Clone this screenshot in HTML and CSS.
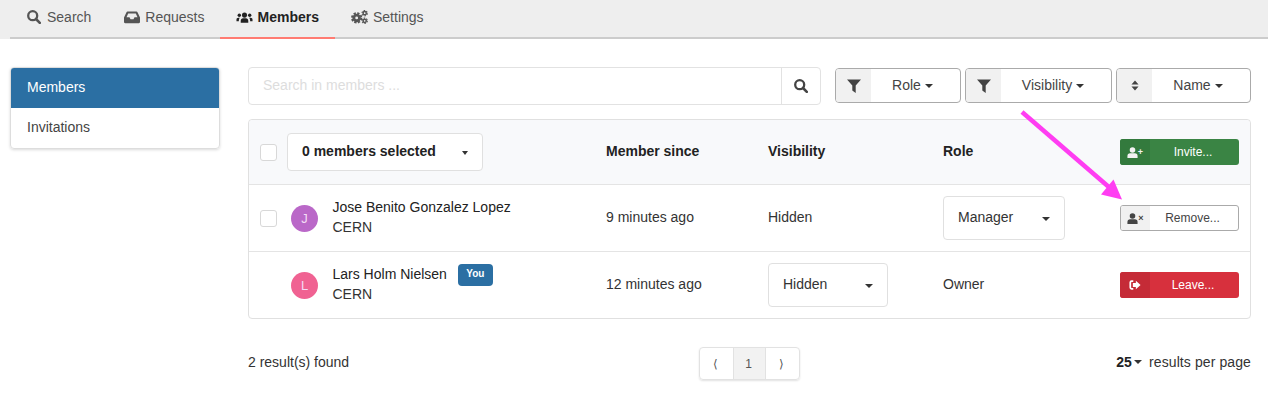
FILE: index.html
```html
<!DOCTYPE html>
<html lang="en">
<head>
    <meta charset="UTF-8">
    <title>Members</title>
    <link rel="stylesheet" href="styles.css">
</head>
<body>
    <svg width="0" height="0" class="defs">
        <symbol id="i-search" viewBox="0 0 14 14"><circle cx="5.7" cy="5.7" r="4.5" fill="none" stroke="currentColor" stroke-width="2.3"/><path d="M9 9l3.8 3.8" stroke="currentColor" stroke-width="2.6" stroke-linecap="round"/></symbol>
        <symbol id="i-inbox" viewBox="0 0 16 14"><path d="M3.6 1.5h8.8c.5 0 .9.3 1.1.7L16 7.6V12c0 .7-.5 1.2-1.2 1.2H1.2C.5 13.2 0 12.7 0 12V7.6l2.5-5.4c.2-.4.6-.7 1.1-.7zm.6 2L2.5 7.2h3l1 2h3l1-2h3l-1.7-3.7z" fill="currentColor" fill-rule="evenodd"/></symbol>
        <symbol id="i-users" viewBox="0 0 18 14"><circle cx="9" cy="5" r="2.7" fill="currentColor"/><circle cx="3.5" cy="5.2" r="1.8" fill="currentColor"/><circle cx="14.5" cy="5.2" r="1.8" fill="currentColor"/><path d="M5 13v-1.8C5 9.4 6 8.4 7.5 8.4h3c1.5 0 2.5 1 2.5 2.8V13zM.5 11.5V9.8c0-1.2.8-2 2-2h1.7c-.8.7-1.2 1.8-1.2 3.7zM17.5 11.5V9.8c0-1.2-.8-2-2-2h-1.7c.8.7 1.2 1.8 1.2 3.7z" fill="currentColor"/></symbol>
        <symbol id="i-cogs" viewBox="0 0 18 14"><g fill="none" stroke="currentColor"><circle cx="6" cy="8" r="3" stroke-width="3"/><circle cx="6" cy="8" r="5" stroke-width="2" stroke-dasharray="2.4 1.53"/><circle cx="14.5" cy="3" r="1.7" stroke-width="1.6"/><circle cx="14.5" cy="3" r="2.8" stroke-width="1.2" stroke-dasharray="1.6 1.33"/><circle cx="14.5" cy="11" r="1.7" stroke-width="1.6"/><circle cx="14.5" cy="11" r="2.8" stroke-width="1.2" stroke-dasharray="1.6 1.33"/></g></symbol>
        <symbol id="i-filter" viewBox="0 0 14 14"><path d="M0 .5h14L8.7 6.5V14L5.3 11.5V6.5z" fill="currentColor"/></symbol>
        <symbol id="i-sort" viewBox="0 0 10 14"><path d="M5 .5l4.5 5.3H.5zM5 13.5L.5 8.2h9z" fill="currentColor"/></symbol>
        <symbol id="i-user" viewBox="0 0 12 13"><circle cx="6" cy="3.6" r="3.3" fill="currentColor"/><path d="M0 13v-2.4C0 8.5 1.3 7.3 3.2 7.3h5.600c1.900 0 3.200 1.200 3.200 3.300V13z" fill="currentColor"/></symbol>
        <symbol id="i-signout" viewBox="0 0 14 14"><path d="M5 2.5H3C2 2.500 1.500 3 1.500 4v6c0 1 .5 1.500 1.500 1.500h2" fill="none" stroke="currentColor" stroke-width="2"/><path d="M8 2l5.500 5L8 12V9.200H4.500V4.800H8z" fill="currentColor"/></symbol>
    </svg>

    <nav class="tabs">
        <div class="tab-list">
            <a class="tab"><svg class="icon"><use href="#i-search"/></svg>Search</a>
            <a class="tab tab-requests"><svg class="icon icon-inbox"><use href="#i-inbox"/></svg>Requests</a>
            <a class="tab active"><svg class="icon icon-wide"><use href="#i-users"/></svg>Members</a>
            <a class="tab"><svg class="icon icon-wide"><use href="#i-cogs"/></svg>Settings</a>
        </div>
    </nav>

    <div class="page">
        <aside class="side-menu">
            <a class="side-item active">Members</a>
            <a class="side-item">Invitations</a>
        </aside>

        <main class="content">
            <div class="toolbar">
                <div class="search">
                    <span class="search-input">Search in members ...</span>
                    <span class="search-btn"><svg class="icon"><use href="#i-search"/></svg></span>
                </div>
                <div class="filter filter-role">
                    <span class="filter-icon"><svg class="icon"><use href="#i-filter"/></svg></span>
                    <span class="filter-label">Role <i class="caret"></i></span>
                </div>
                <div class="filter filter-vis">
                    <span class="filter-icon"><svg class="icon"><use href="#i-filter"/></svg></span>
                    <span class="filter-label">Visibility <i class="caret"></i></span>
                </div>
                <div class="filter filter-name">
                    <span class="filter-icon"><svg class="icon icon-sort"><use href="#i-sort"/></svg></span>
                    <span class="filter-label">Name <i class="caret"></i></span>
                </div>
            </div>

            <div class="table">
                <div class="row head">
                    <div class="cell-first">
                        <span class="checkbox"></span>
                        <div class="select select-bulk"><b>0 members selected</b><i class="caret caret-small"></i></div>
                    </div>
                    <b>Member since</b>
                    <b>Visibility</b>
                    <b>Role</b>
                    <a class="action green"><span class="action-icon"><svg class="icon icon-user"><use href="#i-user"/></svg><span class="mark">+</span></span><span class="action-label">Invite...</span></a>
                </div>
                <div class="row">
                    <div class="cell-first">
                        <span class="checkbox"></span>
                        <span class="avatar purple">J</span>
                        <div class="person">
                            <div class="person-name">Jose Benito Gonzalez Lopez</div>
                            <div>CERN</div>
                        </div>
                    </div>
                    <span>9 minutes ago</span>
                    <span>Hidden</span>
                    <div class="select select-role">Manager<i class="caret"></i></div>
                    <a class="action plain"><span class="action-icon"><svg class="icon icon-user"><use href="#i-user"/></svg><span class="mark">×</span></span><span class="action-label">Remove...</span></a>
                </div>
                <div class="row">
                    <div class="cell-first">
                        <span class="checkbox-gap"></span>
                        <span class="avatar pink">L</span>
                        <div class="person">
                            <div class="person-name">Lars Holm Nielsen <span class="badge">You</span></div>
                            <div>CERN</div>
                        </div>
                    </div>
                    <span>12 minutes ago</span>
                    <div class="select select-vis">Hidden<i class="caret"></i></div>
                    <span>Owner</span>
                    <a class="action red"><span class="action-icon"><svg class="icon icon-leave"><use href="#i-signout"/></svg></span><span class="action-label">Leave...</span></a>
                </div>
            </div>

            <div class="footer">
                <span class="footer-side">2 result(s) found</span>
                <div class="pager">
                    <span class="prev">⟨</span>
                    <span class="current">1</span>
                    <span class="next">⟩</span>
                </div>
                <span class="footer-side per-page"><b>25</b><i class="caret"></i>results per page</span>
            </div>
        </main>
    </div>

    <svg class="arrow" width="1268" height="401" viewBox="0 0 1268 401">
        <path d="M1022 112L1110 188" stroke="#ff3df2" stroke-width="4.5"/>
        <path d="M1122 199.5L1101 194.5L1113.5 179.5z" fill="#ff3df2"/>
    </svg>
</body>
</html>
```

FILE: styles.css
```css
* {
    box-sizing: border-box;
}
body {
    margin: 0;
    height: 401px;
    overflow: hidden;
    position: relative;
    background-color: #fff;
    font-family: "Liberation Sans", Arial, sans-serif;
    font-size: 14px;
    color: #333;
}
b {
    color: #222;
}
.defs {
    position: absolute;
}
.icon {
    width: 14px;
    height: 14px;
    flex: none;
}
.icon-wide {
    width: 17px;
}
.icon-inbox {
    width: 16px;
}

/* top tabs */
.tabs {
    padding-left: 10px;
    background-color: #eee;
}
.tab-list {
    display: flex;
    align-items: flex-start;
    height: 39px;
    border-bottom: 2px solid #ccc;
}
.tab {
    display: flex;
    align-items: center;
    gap: 5px;
    height: 39px;
    padding: 0 16px 5px 16px;
    color: #555;
}
.tab:first-child {
    gap: 6px;
    padding: 0 17px 5px 17px;
}
.tab-requests {
    padding-right: 15px;
}
.tab.active {
    color: #222;
    font-weight: bold;
    border-bottom: 2px solid #ff7b72;
    padding-bottom: 3px;
}

/* page */
.page {
    display: flex;
    align-items: flex-start;
    padding: 28px 17px 0 10px;
}
.side-menu {
    width: 210px;
    margin-right: 28px;
    border: 1px solid #ddd;
    border-radius: 4px;
    box-shadow: 0 1px 3px rgba(0, 0, 0, 0.15);
    overflow: hidden;
    flex: none;
}
.side-item {
    display: flex;
    align-items: center;
    height: 40px;
    padding: 0 0 2px 16px;
    color: #444;
}
.side-item.active {
    background-color: #2b6fa3;
    color: #fff;
}
.content {
    flex: 1;
}

/* toolbar */
.toolbar {
    display: flex;
    align-items: flex-start;
    gap: 4px;
    height: 38px;
}
.search {
    display: flex;
    width: 573px;
    height: 38px;
    margin-right: 10px;
    border: 1px solid #e2e2e2;
    border-radius: 4px;
}
.search-input {
    flex: 1;
    display: flex;
    align-items: center;
    padding: 0 0 2px 14px;
    color: #ddd;
}
.search-btn {
    width: 39px;
    display: flex;
    align-items: center;
    justify-content: center;
    border-left: 1px solid #e2e2e2;
    color: #444;
}
.filter {
    display: flex;
    height: 35px;
    margin-top: 1px;
    border: 1px solid #aaa;
    border-radius: 4px;
    overflow: hidden;
    color: #444;
}
.filter-role {
    width: 126px;
}
.filter-vis {
    width: 147px;
}
.filter-name {
    width: 135px;
}
.filter-icon {
    width: 35px;
    display: flex;
    align-items: center;
    justify-content: center;
    background-color: #f1f1f1;
}
.filter-label {
    flex: 1;
    display: flex;
    align-items: center;
    justify-content: center;
    gap: 4px;
    padding: 0 6px 2px 0;
}
.icon-sort {
    width: 8px;
    height: 11px;
}
.caret {
    display: inline-block;
    width: 0;
    height: 0;
    margin-top: 3px;
    border-left: 4px solid transparent;
    border-right: 4px solid transparent;
    border-top: 4px solid #333;
}
.caret-small {
    border-left-width: 3.5px;
    border-right-width: 3.5px;
}

/* table */
.table {
    margin-top: 14px;
    border: 1px solid #e0e0e0;
    border-radius: 4px;
}
.row {
    display: grid;
    grid-template-columns: 346px 162px 175px 177px 119px;
    align-items: center;
    height: 67px;
    padding-left: 11px;
    border-top: 1px solid #e4e4e4;
}
.row.head {
    height: 64px;
    border-top: 0;
    background-color: #f8f9fb;
    border-radius: 4px 4px 0 0;
}
.row > span,
.row > b {
    padding-bottom: 2px;
}
.cell-first {
    display: flex;
    align-items: center;
}
.checkbox {
    width: 17px;
    height: 17px;
    margin-right: 10px;
    background-color: #fff;
    border: 1px solid #d8d8d8;
    border-radius: 3px;
}
.checkbox-gap {
    width: 27px;
}
.select {
    display: flex;
    align-items: center;
    justify-content: space-between;
    height: 44px;
    padding: 0 14px 2px;
    background-color: #fff;
    border: 1px solid #e0e0e0;
    border-radius: 4px;
}
.select-bulk {
    width: 196px;
    height: 38px;
}
.select-role {
    width: 122px;
}
.select-vis {
    width: 120px;
}
.avatar {
    display: flex;
    align-items: center;
    justify-content: center;
    width: 27px;
    height: 27px;
    margin-left: 4px;
    margin-right: 14.5px;
    border-radius: 50%;
    color: #f3dcf5;
    font-size: 13px;
}
.avatar.purple {
    background-color: #ba68c8;
}
.avatar.pink {
    background-color: #f06292;
}
.person {
    padding-bottom: 2px;
    line-height: 20px;
}
.person-name {
    display: flex;
    align-items: center;
    gap: 11px;
    height: 20px;
    color: #222;
}
.badge {
    flex: none;
    width: 35px;
    height: 22px;
    margin-top: 2px;
    line-height: 20px;
    text-align: center;
    background-color: #2b6fa3;
    border-radius: 4px;
    color: #fff;
    font-size: 10px;
    font-weight: bold;
}

/* action buttons */
.action {
    display: flex;
    width: 119px;
    height: 26px;
    border-radius: 3px;
    overflow: hidden;
    font-size: 12px;
}
.action-icon {
    display: flex;
    align-items: center;
    justify-content: center;
    width: 30px;
    flex: none;
}
.action-label {
    flex: 1;
    display: flex;
    align-items: center;
    justify-content: center;
    padding-right: 3px;
}
.icon-user {
    width: 11px;
    height: 11px;
}
.icon-leave {
    width: 12px;
    height: 12px;
}
.mark {
    font-size: 9px;
    font-weight: bold;
    line-height: 1;
}
.green {
    background-color: #3a8444;
    color: #fff;
}
.green .action-icon {
    background-color: #337a3d;
    color: #f2f2f2;
}
.red {
    background-color: #d7303d;
    color: #fff;
}
.red .action-icon {
    background-color: #c52b37;
}
.plain {
    border: 1px solid #aaa;
    color: #444;
}
.plain .action-icon {
    width: 29px;
    background-color: #f1f1f1;
}

/* footer */
.footer {
    display: flex;
    align-items: center;
    justify-content: space-between;
    margin-top: 28px;
}
.footer-side {
    width: 260px;
    padding-bottom: 3px;
}
.per-page {
    text-align: right;
    letter-spacing: 0.1px;
}
.per-page .caret {
    margin: 0 7px 2px 2px;
    vertical-align: middle;
}
.pager {
    display: flex;
    height: 33px;
    border: 1px solid #e2e2e2;
    border-radius: 4px;
    box-shadow: 0 1px 2px rgba(0, 0, 0, 0.12);
    font-size: 12px;
    color: #555;
}
.pager span {
    display: flex;
    align-items: center;
    justify-content: center;
    width: 33px;
}
.pager .prev {
    padding-right: 3px;
}
.pager .next {
    padding-right: 2px;
}
.pager .current {
    padding-right: 2px;
    background-color: #f2f2f2;
    border-left: 1px solid #e2e2e2;
    border-right: 1px solid #e2e2e2;
}

/* annotation drawn over the screenshot */
.arrow {
    position: absolute;
    left: 0;
    top: 0;
    pointer-events: none;
}
```
